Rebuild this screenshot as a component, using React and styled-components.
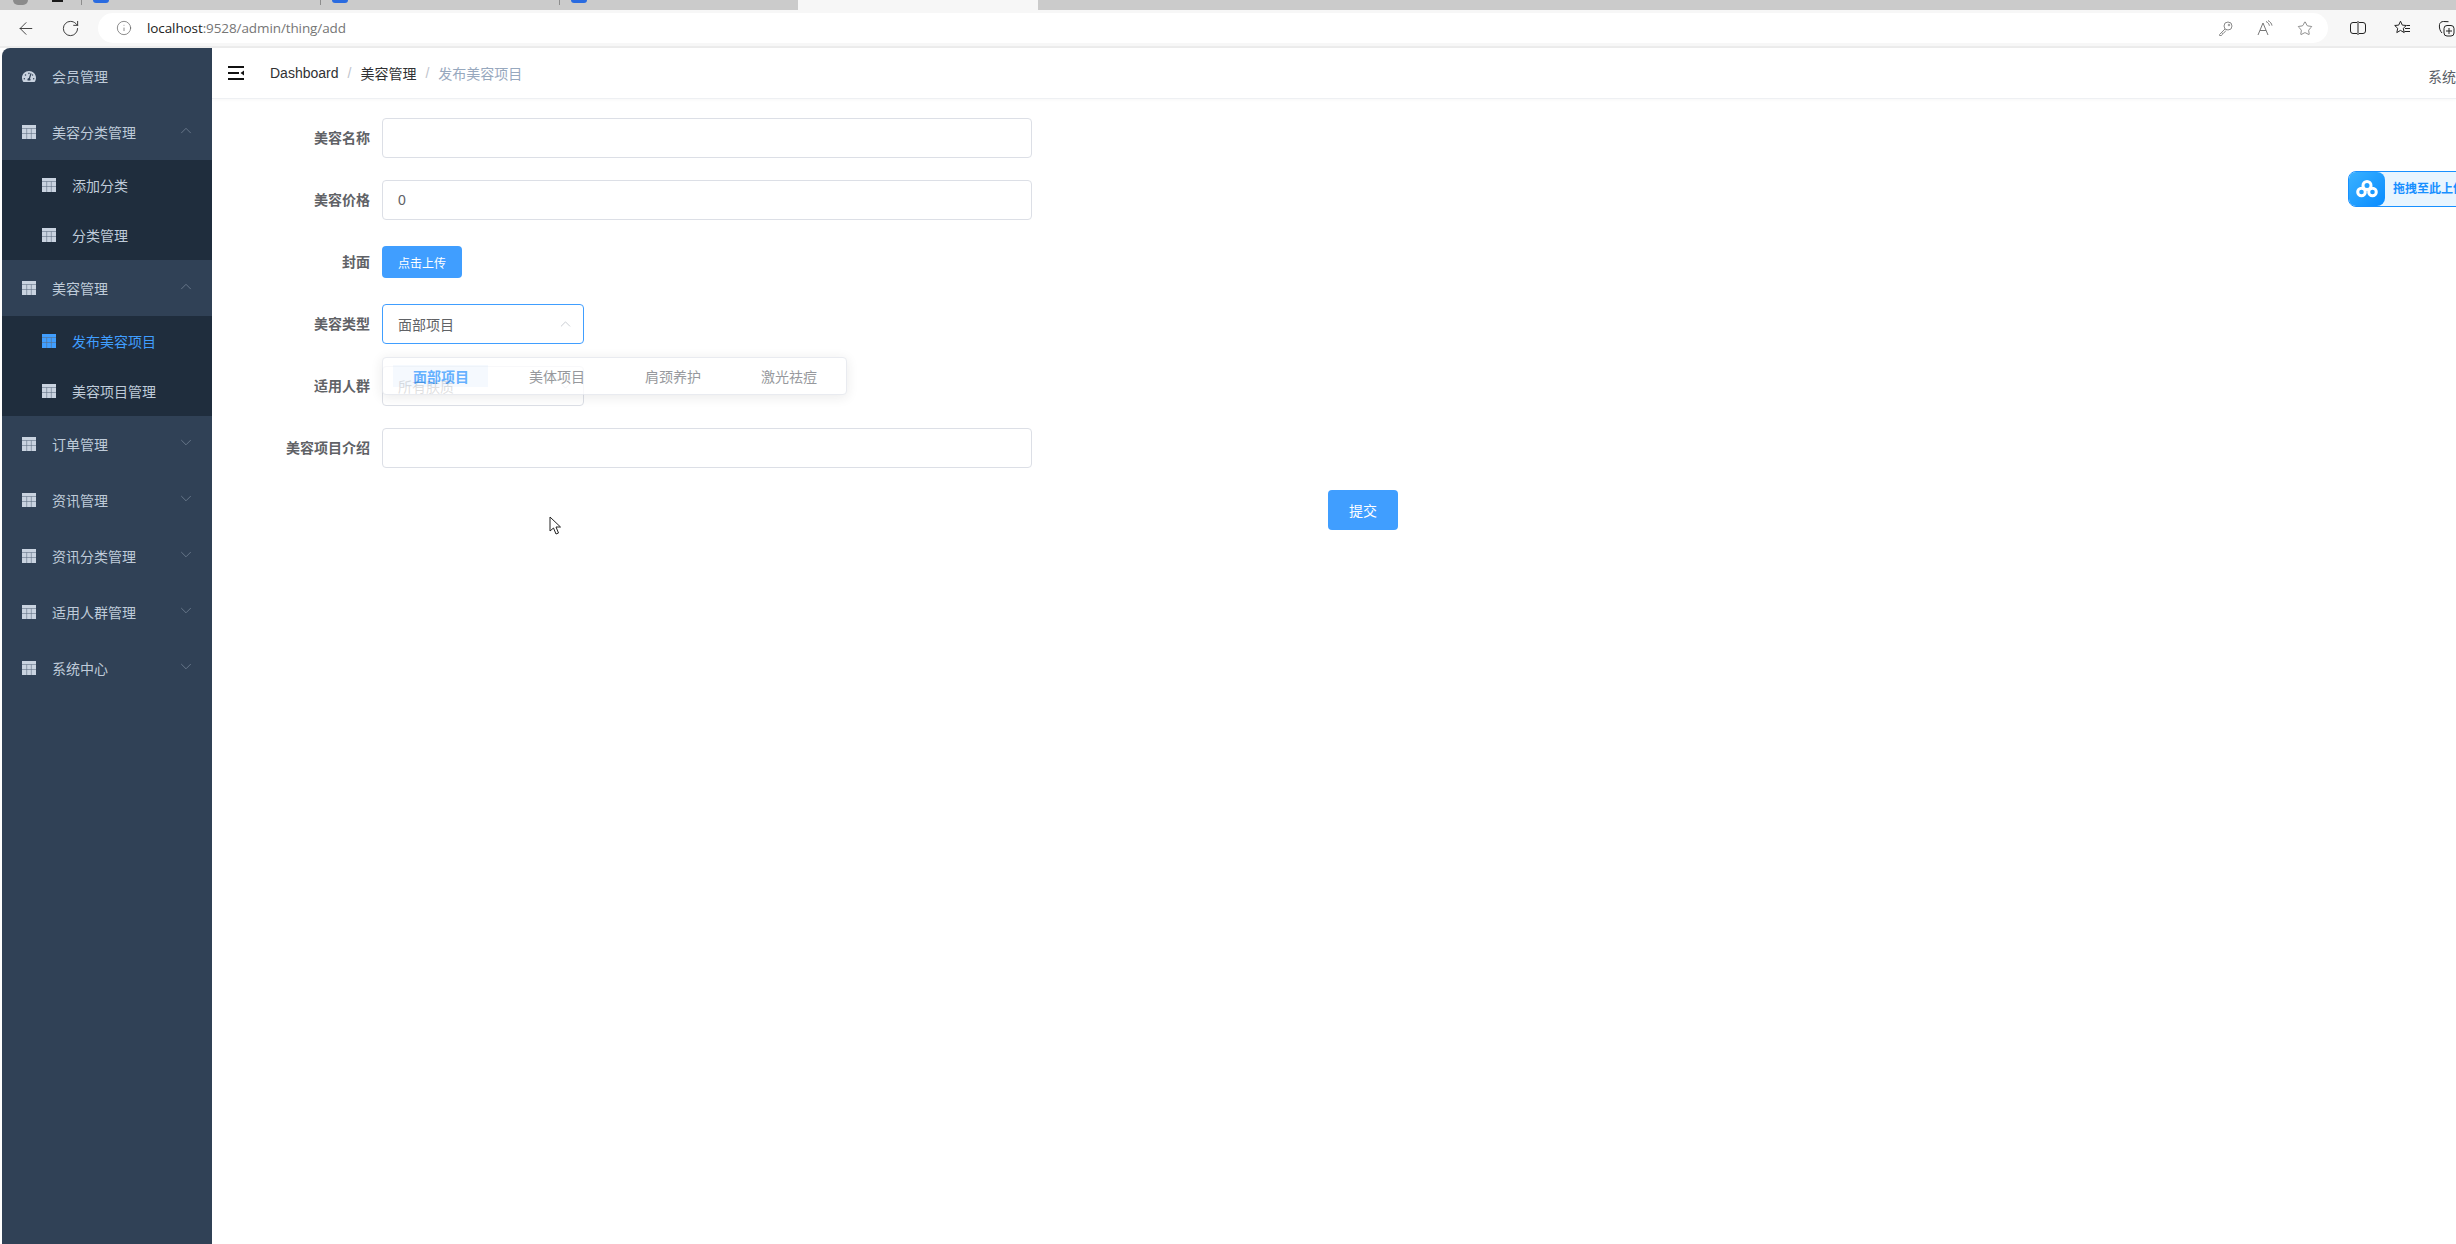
import React from "react";
import styled, { createGlobalStyle } from "styled-components";
import { ArrowLeft, RotateCw, Info, Star, ChevronDown, ChevronUp } from "lucide-react";
import { FaTachometerAlt } from "react-icons/fa";

const Global = createGlobalStyle`
  html, body { margin: 0; padding: 0; width: 2456px; height: 1244px; overflow: hidden; background: #fff; }
  body { font-family: "Liberation Sans", "Noto Sans CJK SC", sans-serif; font-size: 14px; }
  * { box-sizing: border-box; }
`;

const Shell = styled.div`
  position: relative; width: 2456px; height: 1244px; overflow: hidden;
  display: flex; flex-direction: column; background: #fff;
`;

/* browser chrome */
const TabStrip = styled.div`
  height: 10px; background: #cbcbcb; display: flex; align-items: flex-start; flex: none; overflow: hidden;
`;
const SysControls = styled.div`
  width: 81px; flex: none; display: flex; padding-left: 13px; gap: 24px; height: 9px;
`;
const Avatar = styled.span`width: 15px; height: 5px; border-radius: 0 0 8px 8px; background: #8b8b8b;`;
const TabButton = styled.span`width: 11px; height: 2px; background: #1a1a1a;`;
const Tab = styled.div`
  width: ${p => p.$w}px; height: ${p => (p.$active ? 10 : 5)}px; flex: none; display: flex; padding-left: 11px;
  border-left: ${p => (p.$plain ? "none" : "1px solid #8d8d8d")};
  background: ${p => (p.$active ? "#f7f7f7" : "transparent")};
`;
const Favicon = styled.span`width: 16px; height: 3px; border-radius: 0 0 4px 4px; background: #2a6be0;`;

const Toolbar = styled.div`
  height: 38px; flex: none; background: #f7f7f7; border-bottom: 2px solid #ececec;
  display: flex; align-items: center; padding: 0 0 0 16px; color: #222;
`;
const ToolBtn = styled.span`
  width: ${p => p.$w || 20}px; margin-right: ${p => p.$mr || 0}px; display: flex; justify-content: center; flex: none; align-items: center;
`;
const AddressPill = styled.div`
  width: 2230px; height: 30px; background: #fff; border-radius: 15px; flex: none; margin-right: 20px;
  display: flex; align-items: center; padding: 0 15px 0 18px; position: relative;
`;
const Url = styled.div`
  margin-left: 15px; font-family: "Open Sans", "Liberation Sans", sans-serif; font-size: 13.5px; color: #767676; flex: 1; letter-spacing: -0.1px;
  b { font-weight: 400; color: #222; }
`;

/* app */
const Page = styled.div`
  flex: 1; display: flex; padding-left: 2px; min-height: 0;
`;
const Sidebar = styled.aside`
  width: 210px; flex: none; background: #304156; border-top-left-radius: 8px; overflow: hidden;
  color: #bfcbd9;
`;
const MenuRow = styled.div`
  height: 56px; display: flex; align-items: center; padding-left: 20px; position: relative; color: #bfcbd9; gap: 16px;
`;
const SubMenu = styled.div`background: #1f2d3d;`;
const SubRow = styled.div`
  height: 50px; display: flex; align-items: center; padding-left: 40px; gap: 16px;
  color: ${p => (p.$active ? "#409eff" : "#bfcbd9")};
`;
const IconSlot = styled.span`width: 14px; height: 14px; display: flex; align-items: center; justify-content: center; flex: none;`;
const Caret = styled.span`
  position: absolute; right: 17px; top: 50%; transform: translateY(-58%); display: flex; color: #7f8ea0;
`;
const Main = styled.main`flex: 1; min-width: 0; position: relative;`;
const Navbar = styled.header`
  height: 51px; border-bottom: 1px solid #eef0f3; display: flex; align-items: center; padding-left: 16px; padding-bottom: 1px; position: relative;
  box-shadow: 0 1px 3px rgba(0,21,41,.03);
`;
const Crumbs = styled.nav`display: flex; align-items: center; margin-left: 25px; color: #303133;`;
const Crumb = styled.span`color: ${p => (p.$last ? "#97a8be" : "#303133")};`;
const CrumbSep = styled.span`color: #c0c4cc; margin: 0 9px;`;
const UserName = styled.div`
  position: absolute; left: 2216px; top: 18px; color: #5a5e66; white-space: nowrap; width: 60px;
`;

const FormWrap = styled.div`padding: 19px 0 0 0; width: 900px; position: relative;`;
const FormItem = styled.div`display: flex; min-height: 40px; margin-bottom: 22px; align-items: center;`;
const Label = styled.label`
  width: 158px; flex: none; text-align: right; color: #606266; font-weight: 700; line-height: 40px;
`;
const Control = styled.div`margin-left: 12px; flex: none;`;
const TextInput = styled.div`
  width: ${p => p.$w || 650}px; height: 40px; border: 1px solid ${p => (p.$focus ? "#409eff" : "#dcdfe6")}; border-radius: 4px;
  display: flex; align-items: center; padding: 0 15px; color: #606266; position: relative; background: #fff;
`;
const SelectCaret = styled.span`position: absolute; right: 9px; top: 50%; transform: translateY(-50%); display: flex; color: #b4b8c0;`;
const PrimaryBtn = styled.button`
  font: inherit; border: none; background: #409eff; color: #fff; border-radius: 4px; cursor: pointer; padding: 0;
  width: ${p => p.$w}px; height: ${p => p.$h}px; font-size: ${p => p.$fs}px; display: block;
`;
const SubmitRow = styled.div`display: flex; padding-left: 1116px; width: 1300px;`;
const Dropdown = styled.div`
  position: absolute; left: 170px; top: 258px; width: 465px; height: 38px; background: #fff; border-radius: 4px;
  border: 1px solid #e4e7ed; box-shadow: 0 2px 12px rgba(0,0,0,.1); opacity: .8;
  display: flex; align-items: center; padding-left: 10px; z-index: 5;
`;
const DropItem = styled.div`
  width: 116px; flex: none; height: 22px; display: flex; align-items: center; padding-left: 20px;
  color: ${p => (p.$active ? "#409eff" : "#7d7f85")}; font-weight: ${p => (p.$active ? 700 : 400)};
  background: linear-gradient(${p => (p.$active ? "#f3f8fe, #f3f8fe" : "transparent, transparent")}) no-repeat left / 95px 100%;
`;
const Cloud = styled.div`
  position: absolute; left: 2348px; top: 171px; width: 120px; height: 36px; display: flex; z-index: 6;
  border: 1px solid #1890ff; border-radius: 8px 0 0 8px; background: #e8f5ff; overflow: hidden;
`;
const CloudIcon = styled.div`
  width: 36px; flex: none; background: linear-gradient(135deg, #39b1ff, #0a8cff); display: flex; align-items: center; justify-content: center;
  border-radius: 0 8px 8px 0;
`;
const CloudText = styled.div`
  margin-left: 8px; color: #1890ff; font-size: 12px; font-weight: 700; line-height: 34px; white-space: nowrap;
`;
const Pointer = styled.svg`position: absolute; left: 549px; top: 516px; z-index: 9;`;

const TableIcon = ({ color = "#c9d3e0" }) => (
  <svg width="14" height="14" viewBox="0 0 14 14">
    <rect x="0" y="0" width="14" height="14" fill={color} />
    <path d="M0 3.500h14M4.700 3.500V14M9.300 3.500V14M0 8.500h14" stroke="#5b6b80" strokeWidth=".8" fill="none" opacity=".7" />
  </svg>
);

const Hamburger = () => (
  <svg width="17" height="14" viewBox="0 0 17 14" style={{ display: "block" }}>
    <path d="M0 0h16v2H0zM0 6h11v2H0zM0 12h16v2H0z" fill="#111" />
    <path d="M12.500 7l3.500-2.600v5.200z" fill="#111" />
  </svg>
);

const KeyIcon = () => (
  <svg width="15" height="15" viewBox="0 0 15 15" fill="none" stroke="#8a8a8a" strokeWidth="1">
    <circle cx="10" cy="5" r="4" />
    <path d="M7 8L1.500 13.500v1h2l.8-1v-1.200h1.200L8 9.500" />
    <circle cx="11" cy="4" r=".8" />
  </svg>
);
const ReadAloud = () => (
  <svg width="16" height="16" viewBox="0 0 16 16" fill="none" stroke="#777" strokeWidth="1">
    <path d="M1 15L6 3l5 12M3 10.500h6" />
    <path d="M9 1.500c2 1 3 2.400 3.400 4.200M11 .6c2.400 1.200 3.600 3 4 5" />
  </svg>
);
const SplitIcon = () => (
  <svg width="16" height="14" viewBox="0 0 16 14" fill="none" stroke="#222" strokeWidth="1">
    <path d="M7 1.500H3a2.500 2.500 0 0 0-2.500 2.500v6A2.500 2.500 0 0 0 3 12.500h4M9 1.500h4A2.500 2.500 0 0 1 15.500 4v6a2.500 2.500 0 0 1-2.500 2.500H9" />
    <path d="M8 0v14" />
  </svg>
);
const FavList = () => (
  <svg width="17" height="16" viewBox="0 0 17 16" fill="none" stroke="#222" strokeWidth="1">
    <path d="M6.500 1.200l1.800 3.900 4 .4-3 2.800.9 4.300-3.700-2.200-3.700 2.200.9-4.300-3-2.800 4-.4z" />
    <path d="M11 8.500h5M12.500 5.500h3.500M10.500 11.500h5.500" />
  </svg>
);
const Collections = () => (
  <svg width="17" height="17" viewBox="0 0 17 17" fill="none" stroke="#222" strokeWidth="1">
    <path d="M4 13C2 11 1 8 1.500 4.500 2 2.500 3.500 1.500 5.500 1.500l5 .2" />
    <rect x="6" y="5.500" width="10" height="10.500" rx="3" />
    <path d="M11 8v6M8 11h6" />
  </svg>
);
const CloudLogo = () => (
  <svg width="22" height="20" viewBox="0 0 22 20" fill="none" stroke="#fff" strokeWidth="3">
    <circle cx="11" cy="6.500" r="4" />
    <circle cx="5.500" cy="13" r="3.800" />
    <circle cx="16.500" cy="13" r="3.800" />
  </svg>
);

const Chevron = ({ open }) => (
  <Caret>{open ? <ChevronUp size={18} strokeWidth={.9} /> : <ChevronDown size={18} strokeWidth={.9} />}</Caret>
);

const menu = [
  { label: "美容分类管理", open: true, children: [{ label: "添加分类" }, { label: "分类管理" }] },
  { label: "美容管理", open: true, children: [{ label: "发布美容项目", active: true }, { label: "美容项目管理" }] },
  { label: "订单管理" },
  { label: "资讯管理" },
  { label: "资讯分类管理" },
  { label: "适用人群管理" },
  { label: "系统中心" },
];

export default function App() {
  return (
    <Shell>
      <Global />
      <TabStrip>
        <SysControls><Avatar /><TabButton /></SysControls>
        <Tab $w={239}><Favicon /></Tab>
        <Tab $w={239}><Favicon /></Tab>
        <Tab $w={239}><Favicon /></Tab>
        <Tab $w={240} $active $plain />
        <Tab $w={20} $plain />
      </TabStrip>
      <Toolbar>
        <ToolBtn $mr={24}><ArrowLeft size={21} strokeWidth={1} /></ToolBtn>
        <ToolBtn $mr={18}><RotateCw size={19} strokeWidth={1.1} /></ToolBtn>
        <AddressPill>
          <Info size={16} strokeWidth={1} color="#555" />
          <Url><b>localhost</b>:9528/admin/thing/add</Url>
          <ToolBtn $mr={24} $w={16}><KeyIcon /></ToolBtn>
          <ToolBtn $mr={24} $w={16}><ReadAloud /></ToolBtn>
          <ToolBtn $w={16}><Star size={17} strokeWidth={1} color="#555" /></ToolBtn>
        </AddressPill>
        <ToolBtn $mr={24}><SplitIcon /></ToolBtn>
        <ToolBtn $mr={24}><FavList /></ToolBtn>
        <ToolBtn><Collections /></ToolBtn>
      </Toolbar>
      <Page>
        <Sidebar>
          <MenuRow><IconSlot><FaTachometerAlt size={15} color="#c9d3e0" /></IconSlot>会员管理</MenuRow>
          {menu.map(m => (
            <div key={m.label}>
              <MenuRow><IconSlot><TableIcon /></IconSlot>{m.label}<Chevron open={m.open} /></MenuRow>
              {m.children && (
                <SubMenu>
                  {m.children.map(c => (
                    <SubRow key={c.label} $active={c.active}>
                      <IconSlot><TableIcon color={c.active ? "#409eff" : "#c9d3e0"} /></IconSlot>{c.label}
                    </SubRow>
                  ))}
                </SubMenu>
              )}
            </div>
          ))}
        </Sidebar>
        <Main>
          <Navbar>
            <Hamburger />
            <Crumbs>
              <Crumb>Dashboard</Crumb><CrumbSep>/</CrumbSep>
              <Crumb>美容管理</Crumb><CrumbSep>/</CrumbSep>
              <Crumb $last>发布美容项目</Crumb>
            </Crumbs>
            <UserName>系统管理员</UserName>
          </Navbar>
          <FormWrap>
            <FormItem><Label>美容名称</Label><Control><TextInput /></Control></FormItem>
            <FormItem><Label>美容价格</Label><Control><TextInput>0</TextInput></Control></FormItem>
            <FormItem><Label>封面</Label><Control><PrimaryBtn $w={80} $h={32} $fs={12}>点击上传</PrimaryBtn></Control></FormItem>
            <FormItem>
              <Label>美容类型</Label>
              <Control><TextInput $w={202} $focus>面部项目<SelectCaret><ChevronUp size={17} strokeWidth={1} /></SelectCaret></TextInput></Control>
            </FormItem>
            <FormItem>
              <Label>适用人群</Label>
              <Control><TextInput $w={202}>所有肤质<SelectCaret><ChevronDown size={17} strokeWidth={1} /></SelectCaret></TextInput></Control>
            </FormItem>
            <FormItem><Label>美容项目介绍</Label><Control><TextInput /></Control></FormItem>
            <Dropdown>
              <DropItem $active>面部项目</DropItem>
              <DropItem>美体项目</DropItem>
              <DropItem>肩颈养护</DropItem>
              <DropItem>激光祛痘</DropItem>
            </Dropdown>
          </FormWrap>
          <SubmitRow><PrimaryBtn $w={70} $h={40} $fs={14}>提交</PrimaryBtn></SubmitRow>
        </Main>
      </Page>
      <Cloud>
        <CloudIcon><CloudLogo /></CloudIcon>
        <CloudText>拖拽至此上传</CloudText>
      </Cloud>
      <Pointer width="13" height="19" viewBox="0 0 13 19">
        <path d="M1 1v14l3.500-3 2.500 6 2.500-1-2.500-6h4.500z" fill="#fff" stroke="#222" strokeWidth="1" />
      </Pointer>
    </Shell>
  );
}
